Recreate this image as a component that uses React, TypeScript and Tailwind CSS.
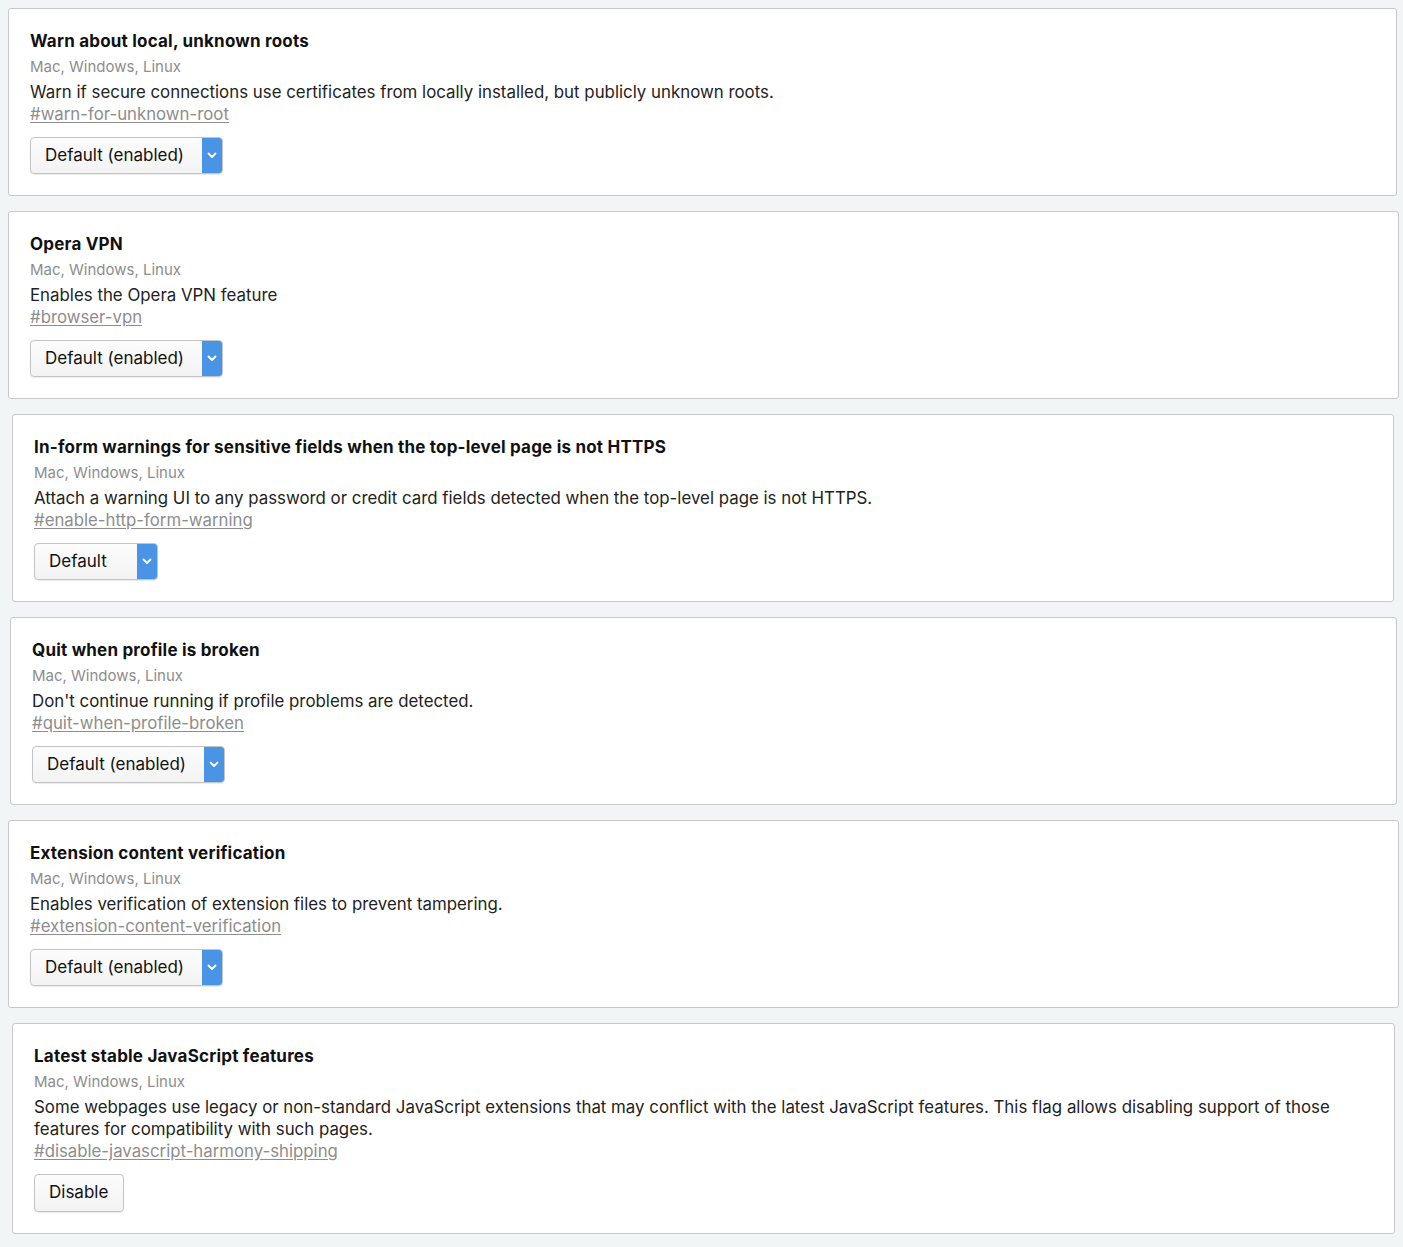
import React from "react";

type Flag = {
  title: string;
  desc: string;
  link: string;
  control: { kind: "select"; label: string; width: string } | { kind: "button"; label: string };
  margin: string;
};

const flags: Flag[] = [
  {
    title: "Warn about local, unknown roots",
    desc: "Warn if secure connections use certificates from locally installed, but publicly unknown roots.",
    link: "#warn-for-unknown-root",
    control: { kind: "select", label: "Default (enabled)", width: "w-[193px]" },
    margin: "ml-[8px] mr-[6px]",
  },
  {
    title: "Opera VPN",
    desc: "Enables the Opera VPN feature",
    link: "#browser-vpn",
    control: { kind: "select", label: "Default (enabled)", width: "w-[193px]" },
    margin: "ml-[8px] mr-[4px]",
  },
  {
    title: "In-form warnings for sensitive fields when the top-level page is not HTTPS",
    desc: "Attach a warning UI to any password or credit card fields detected when the top-level page is not HTTPS.",
    link: "#enable-http-form-warning",
    control: { kind: "select", label: "Default", width: "w-[124px]" },
    margin: "ml-[12px] mr-[9px]",
  },
  {
    title: "Quit when profile is broken",
    desc: "Don't continue running if profile problems are detected.",
    link: "#quit-when-profile-broken",
    control: { kind: "select", label: "Default (enabled)", width: "w-[193px]" },
    margin: "ml-[10px] mr-[6px]",
  },
  {
    title: "Extension content verification",
    desc: "Enables verification of extension files to prevent tampering.",
    link: "#extension-content-verification",
    control: { kind: "select", label: "Default (enabled)", width: "w-[193px]" },
    margin: "ml-[8px] mr-[4px]",
  },
  {
    title: "Latest stable JavaScript features",
    desc: "Some webpages use legacy or non-standard JavaScript extensions that may conflict with the latest JavaScript features. This flag allows disabling support of those features for compatibility with such pages.",
    link: "#disable-javascript-harmony-shipping",
    control: { kind: "button", label: "Disable" },
    margin: "ml-[12px] mr-[8px]",
  },
];

function Chevron() {
  return (
    <svg width="10" height="7" viewBox="0 0 10 7" fill="none">
      <path d="M1.5 1.5 L5 5 L8.5 1.5" stroke="white" strokeWidth="1.8" strokeLinecap="round" strokeLinejoin="round" />
    </svg>
  );
}

function Select({ label, width }: { label: string; width: string }) {
  return (
    <div
      className={`${width} h-[37px] flex items-stretch rounded-[4px] border border-[#c4c4c4] bg-gradient-to-b from-[#fcfcfc] to-[#f3f3f3] shadow-[0_1px_1px_rgba(0,0,0,0.08)] overflow-hidden`}
    >
      <div className="flex-1 flex items-center pl-[14px] text-[17px] text-[#111]">{label}</div>
      <div className="w-[20px] bg-[#4a94e6] flex items-center justify-center">
        <Chevron />
      </div>
    </div>
  );
}

function Card({ f }: { f: Flag }) {
  return (
    <div className={`${f.margin} bg-white border border-[#c8c8c8] rounded-[3px] pl-[21px] pr-[20px] pt-[20px] pb-[21px]`}>
      <div className="text-[17px] leading-[24px] font-bold tracking-[0.2px] text-[#111]">{f.title}</div>
      <div className="mt-[3px] text-[15px] leading-[22px] text-[#8d8d8d]">Mac, Windows, Linux</div>
      <div className="mt-[3px] text-[16.85px] leading-[22px] text-[#222]">{f.desc}</div>
      <div className="text-[16.8px] leading-[22px] text-[#8d8d8d] underline underline-offset-[2px]">{f.link}</div>
      <div className="mt-[12px]">
        {f.control.kind === "select" ? (
          <Select label={f.control.label} width={f.control.width} />
        ) : (
          <div className="w-[90px] h-[38px] flex items-center pl-[14px] rounded-[4px] border border-[#c4c4c4] bg-gradient-to-b from-[#fcfcfc] to-[#f3f3f3] shadow-[0_1px_1px_rgba(0,0,0,0.08)] text-[17px] text-[#111]">
            {f.control.label}
          </div>
        )}
      </div>
    </div>
  );
}

export default function App() {
  return (
    <div
      className="min-h-[1247px] w-[1403px] bg-[#f2f5f6] pt-[8px] pb-[14px] flex flex-col gap-[15px]"
      style={{ fontFamily: "Inter, 'Helvetica Neue', Arial, sans-serif" }}
    >
      {flags.map((f) => (
        <Card key={f.link} f={f} />
      ))}
    </div>
  );
}
